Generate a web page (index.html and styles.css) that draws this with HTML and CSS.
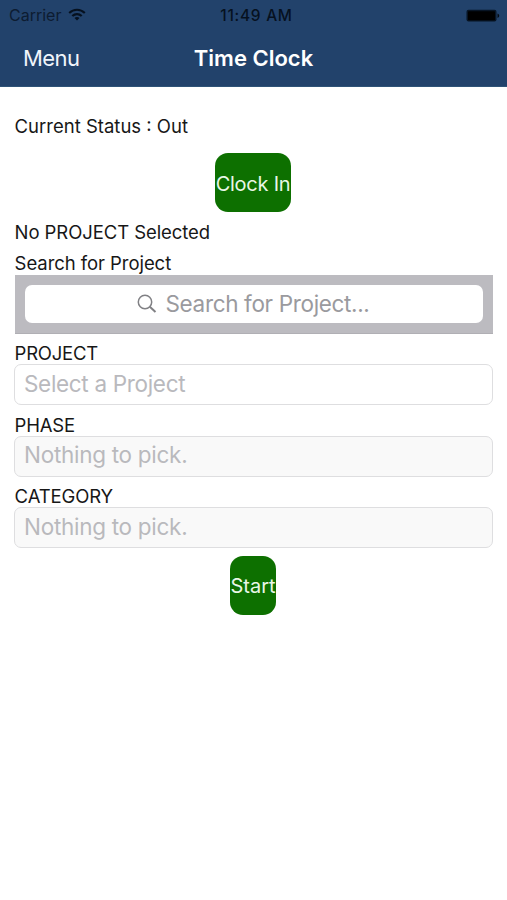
FILE: index.html
```html
<!DOCTYPE html>
<html lang="en">
<head>
<meta charset="utf-8">
<title>Time Clock</title>
<link rel="stylesheet" href="styles.css">
</head>
<body>
<header class="header">
  <div class="status-bar">
    <div class="carrier"><span class="carrier-name">Carrier</span>
      <svg class="wifi" viewBox="0 0 18 13" width="18" height="13" fill="none" stroke="currentColor" stroke-width="2.1">
        <path d="M1.2 5.1C5.6.6 12.4.6 16.8 5.1"/>
        <path d="M4.3 8.1c2.7-2.7 6.7-2.7 9.4 0"/>
        <path d="M9 12.5 6.5 9.9c1.5-1.3 3.5-1.3 5 0z" fill="currentColor" stroke="none"/>
      </svg>
    </div>
    <span class="time">11:49 AM</span>
    <svg class="battery" viewBox="0 0 34 13" width="34" height="13">
      <rect x=".5" y=".8" width="30" height="11.8" rx="2" fill="#071424"/>
      <rect x="2" y="2.2" width="27" height="9" rx=".8" fill="#000"/>
      <path d="M31.5 4.5c2.3.8 2.3 3.6 0 4.4z" fill="#030b14"/>
    </svg>
  </div>
  <nav class="nav">
    <a class="menu">Menu</a>
    <h1 class="title">Time Clock</h1>
    <span></span>
  </nav>
</header>
<main class="content">
  <p class="text status">Current Status : Out</p>
  <button class="button clock-in">Clock In</button>
  <p class="text selected">No PROJECT Selected</p>
  <p class="text search-label">Search for Project</p>
  <div class="search-bar">
    <div class="search-input">
      <svg class="search-icon" viewBox="0 0 20 20" width="20" height="20" fill="none" stroke="currentColor" stroke-width="1.5">
        <circle cx="8" cy="8" r="6.7"/>
        <path d="m12.8 12.8 5.7 5.2" stroke-width="2"/>
      </svg>
      <span class="search-hint">Search for Project...</span>
    </div>
  </div>
  <section class="group">
    <p class="text label project">PROJECT</p>
    <div class="field"><span class="select-hint">Select a Project</span></div>
  </section>
  <section class="group">
    <p class="text label phase">PHASE</p>
    <div class="field disabled"><span class="empty-hint">Nothing to pick.</span></div>
  </section>
  <section class="group">
    <p class="text label category">CATEGORY</p>
    <div class="field disabled"><span class="empty-hint">Nothing to pick.</span></div>
  </section>
  <button class="button start">Start</button>
</main>
</body>
</html>
```
FILE: styles.css
```css
* { box-sizing: border-box; }
body {
  margin: 0;
  min-height: 900px;
  background: #fff;
  color: #171717;
  font-family: Inter, "Liberation Sans", sans-serif;
}
p, h1 { margin: 0; }
span, p, a, h1, button { white-space: nowrap; }
.header { height: 87px; background: #22426b; border-bottom: 1px solid #2f5377; }
.status-bar {
  display: grid;
  grid-template-columns: 1fr auto 1fr;
  align-items: center;
  height: 30px;
  padding: 0 7px 0 9px;
  color: #06111f;
  font-size: 16px;
}
.carrier { display: flex; align-items: center; gap: 7px; }
.carrier-name { color: #0d1c31; }
.wifi { margin-top: -2px; }
.time { font-weight: 500; font-size: 15.5px; letter-spacing: .7px; padding-left: 4px; }
.battery { justify-self: end; }
.nav {
  display: grid;
  grid-template-columns: 1fr auto 1fr;
  align-items: center;
  height: 56px;
  padding: 0 23px;
  color: #fff;
}
.menu { font-size: 22px; line-height: 56px; letter-spacing: -.6px; color: #f0f5fb; }
.title { font-size: 22px; font-weight: 600; }
.content { display: flex; flex-direction: column; padding: 27px 14px 0; }
.text { font-size: 18.5px; line-height: 24px; padding-left: .6px; align-self: flex-start; }
.button {
  align-self: center;
  height: 59px;
  padding: 2px 0 0;
  border: 0;
  border-radius: 13px;
  background: #0d7000;
  color: #e9f7e7;
  font-family: inherit;
  font-size: 20px;
  text-align: center;
}
.clock-in { width: 76px; margin: 15px 1px 8px 0; letter-spacing: -.25px; }
.selected { margin-bottom: 7px; letter-spacing: -.08px; }
.search-label { letter-spacing: -.06px; }
.search-bar { height: 59px; margin-left: 1px; padding: 10px 10px 11px; background: #bcbbc0; border-bottom: 1px solid #b0afb4; }
.search-input {
  display: flex;
  align-items: center;
  justify-content: center;
  gap: 9px;
  height: 38px;
  padding-right: 2px;
  border-radius: 7px;
  background: #fff;
  color: #9a9a9e;
  font-size: 22.5px;
  letter-spacing: -.34px;
}
.search-hint { margin-top: -2px; }
.search-icon { color: #808084; }
.group { margin-top: 8px; height: 63.5px; }
.label { line-height: 23px; margin-bottom: -.6px; }
.project { letter-spacing: -.25px; }
.phase { letter-spacing: -.2px; }
.category { letter-spacing: -.12px; }
.field {
  display: flex;
  align-items: center;
  height: 41px;
  padding: 0 0 3px 9px;
  border: 1px solid #dedee0;
  border-radius: 7px;
  background: #fff;
  color: #b9b9bd;
  font-size: 22.5px;
}
.select-hint { letter-spacing: -.32px; }
.empty-hint { letter-spacing: -.28px; }
.disabled { background: #f9f9f9; }
.start { width: 46px; margin: 7px 1px 0 0; }
```
